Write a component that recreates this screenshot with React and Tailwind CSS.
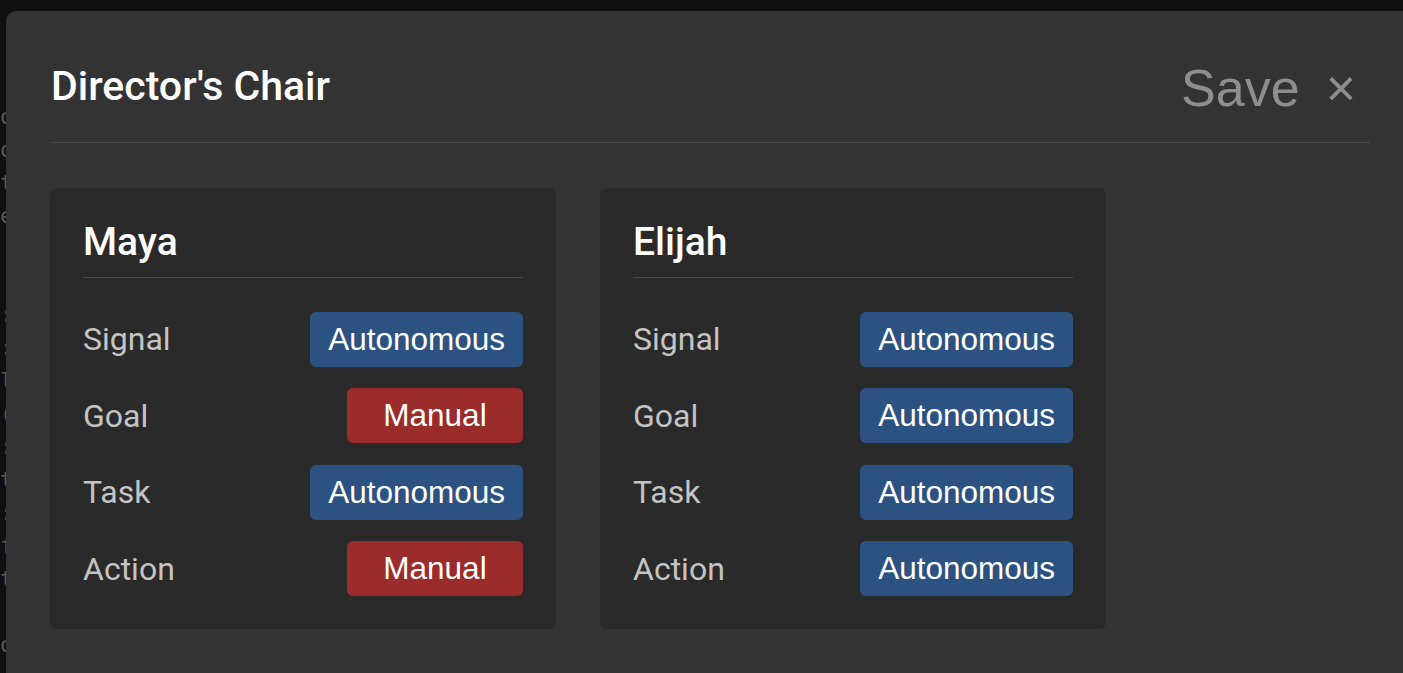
import React from 'react';

// =====================================================
// DIRECTOR'S CHAIR - modal with per-agent autonomy modes
// =====================================================
const AGENTS = [
  {
    name: 'Maya',
    modes: [
      ['Signal', 'auto'],
      ['Goal', 'manual'],
      ['Task', 'auto'],
      ['Action', 'manual'],
    ],
  },
  {
    name: 'Elijah',
    modes: [
      ['Signal', 'auto'],
      ['Goal', 'auto'],
      ['Task', 'auto'],
      ['Action', 'auto'],
    ],
  },
];

const ModeBadge = ({ mode }) => {
  const isAuto = mode === 'auto';
  return (
    <span
      className={`min-w-[176px] h-[55px] px-[18px] flex items-center justify-center rounded-[6px] text-white text-[31.5px] font-['Liberation_Sans',Arial,sans-serif] ${
        isAuto ? 'bg-[#2c5282]' : 'bg-[#9b2c2c]'
      }`}
    >
      {isAuto ? 'Autonomous' : 'Manual'}
    </span>
  );
};

const AgentCard = ({ agent }) => (
  <div className="w-[506px] bg-[#2a2a2a] rounded-[7px] px-[33px] pt-[31px] pb-[33px]">
    <div className="text-[39px] leading-[1.2] font-medium text-white pb-[11px] border-b border-[#4a4a4a]">
      {agent.name}
    </div>
    <div className="flex flex-col gap-[21.5px] mt-[34px]">
      {agent.modes.map(([label, mode]) => (
        <div key={label} className="flex items-center justify-between">
          <span className="text-[32px] text-[#c4c4c4]">{label}</span>
          <ModeBadge mode={mode} />
        </div>
      ))}
    </div>
  </div>
);

const BG_LINES = ['o', 'o', 't', 'e', '', '', ':', ':', 'l', '(', ':', 't', ':', 'f', 't', '', 'o'];

export default function App() {
  return (
    <div className="relative w-[1403px] h-[673px] overflow-hidden bg-[#0f0f0f] font-['Roboto',sans-serif]">
      {/* page behind the modal */}
      <div className="pt-[100px] flex flex-col text-[#5a5a5a] text-[22px] leading-[33px] font-['DejaVu_Sans_Mono',monospace]">
        {BG_LINES.map((c, i) => (
          <span key={i} className="h-[33px]">{c}</span>
        ))}
      </div>

      {/* modal */}
      <div className="absolute left-[6px] top-[11px] w-[1420px] h-[700px] bg-[#333333] rounded-tl-[10px] pl-[45px] pr-[56px]">
        <div className="flex items-center justify-between h-[132px] pt-[20px] border-b border-[#4a4a4a] w-[1319px]">
          <h1 className="text-[41px] font-medium text-white">Director's Chair</h1>
          <div className="flex items-center gap-[26px] pr-[14px] pt-[3px] text-[#8e8e8e] font-['Liberation_Sans',Arial,sans-serif]">
            <span className="text-[52px]">Save</span>
            <span className="text-[52px] leading-none">×</span>
          </div>
        </div>
        <div className="flex gap-[44px] mt-[45px] ml-[-1px]">
          {AGENTS.map((a) => (
            <AgentCard key={a.name} agent={a} />
          ))}
        </div>
      </div>
    </div>
  );
}
